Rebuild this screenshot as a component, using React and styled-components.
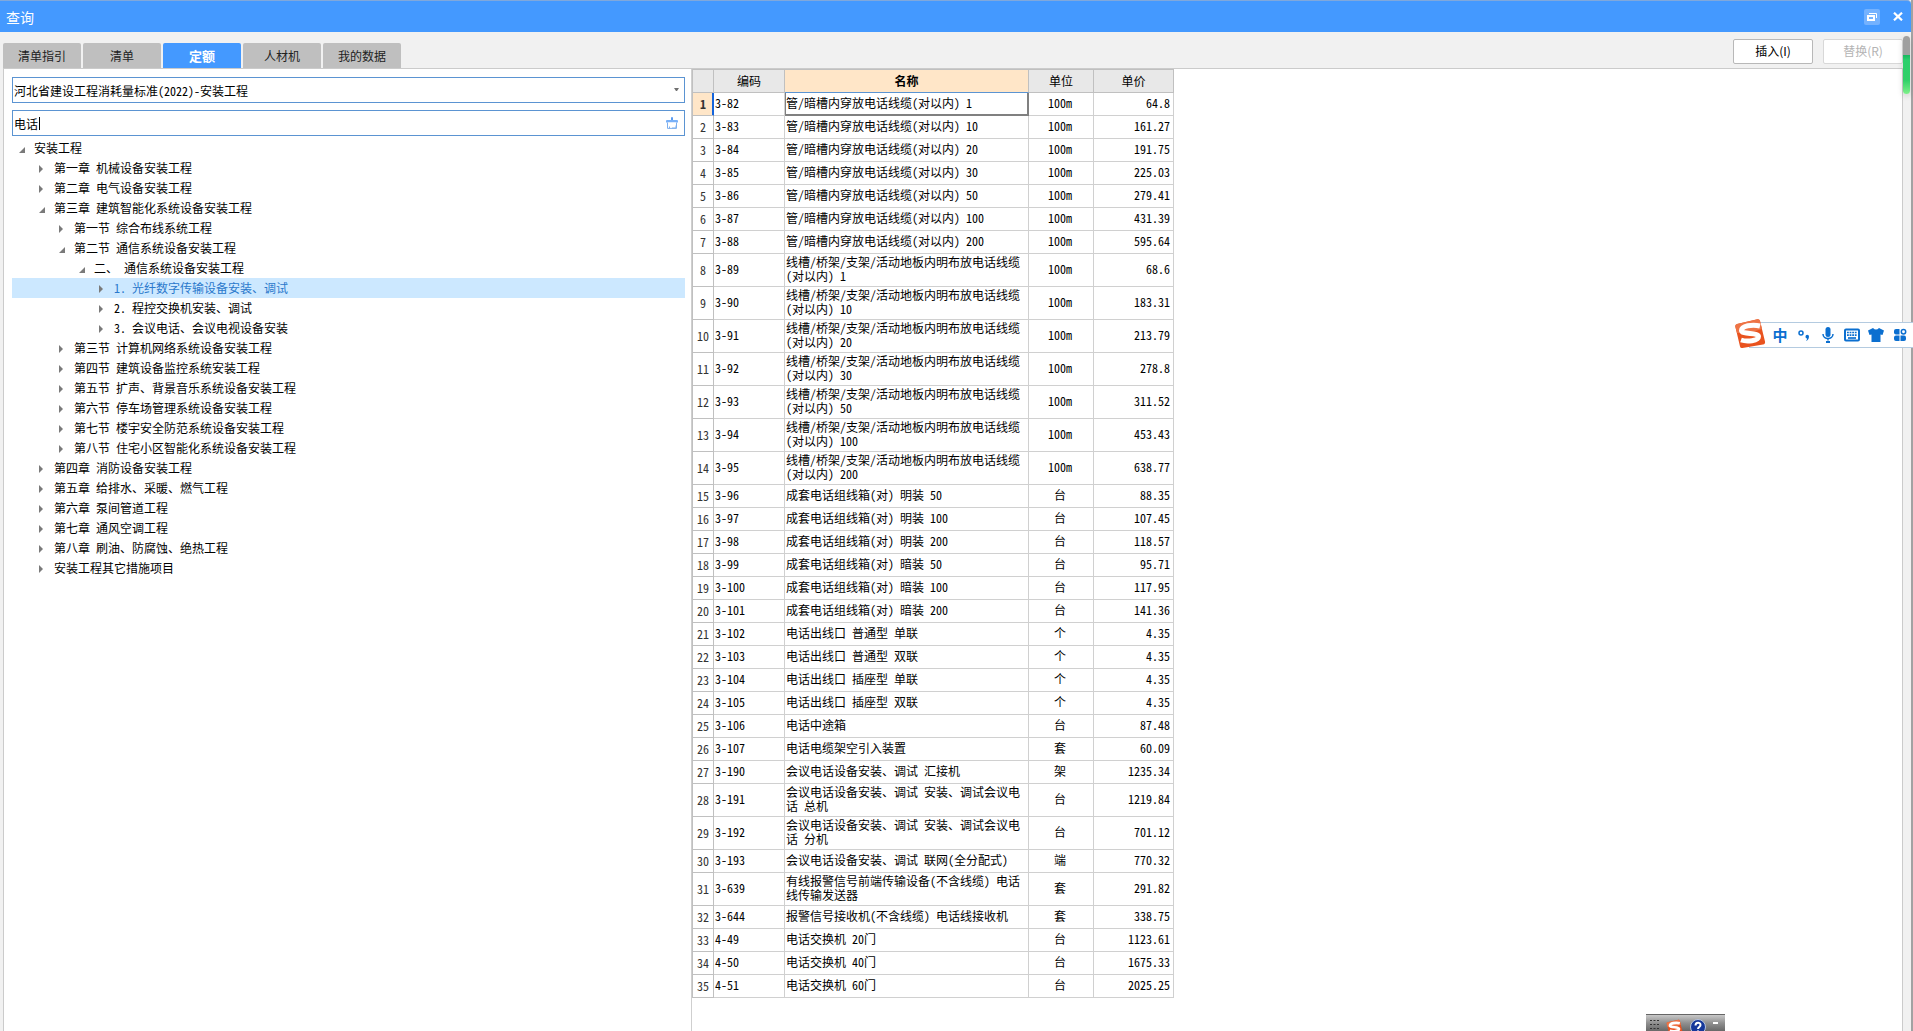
import { useState } from 'react';
import styled, { createGlobalStyle, css } from 'styled-components';

const tabs = ['清单指引', '清单', '定额', '人材机', '我的数据'];

const library = '河北省建设工程消耗量标准(2022)-安装工程';

const treeRows = [
    { level: 0, text: '安装工程', open: true },
    { level: 1, text: '第一章 机械设备安装工程' },
    { level: 1, text: '第二章 电气设备安装工程' },
    { level: 1, text: '第三章 建筑智能化系统设备安装工程', open: true },
    { level: 2, text: '第一节 综合布线系统工程' },
    { level: 2, text: '第二节 通信系统设备安装工程', open: true },
    { level: 3, text: '二、 通信系统设备安装工程', open: true },
    { level: 4, text: '1. 光纤数字传输设备安装、调试' },
    { level: 4, text: '2. 程控交换机安装、调试' },
    { level: 4, text: '3. 会议电话、会议电视设备安装' },
    { level: 2, text: '第三节 计算机网络系统设备安装工程' },
    { level: 2, text: '第四节 建筑设备监控系统安装工程' },
    { level: 2, text: '第五节 扩声、背景音乐系统设备安装工程' },
    { level: 2, text: '第六节 停车场管理系统设备安装工程' },
    { level: 2, text: '第七节 楼宇安全防范系统设备安装工程' },
    { level: 2, text: '第八节 住宅小区智能化系统设备安装工程' },
    { level: 1, text: '第四章 消防设备安装工程' },
    { level: 1, text: '第五章 给排水、采暖、燃气工程' },
    { level: 1, text: '第六章 泵间管道工程' },
    { level: 1, text: '第七章 通风空调工程' },
    { level: 1, text: '第八章 刷油、防腐蚀、绝热工程' },
    { level: 1, text: '安装工程其它措施项目' },
];

// code, name, unit, price
const quotaRows = [
    ['3-82', '管/暗槽内穿放电话线缆(对以内) 1', '100m', '64.8'],
    ['3-83', '管/暗槽内穿放电话线缆(对以内) 10', '100m', '161.27'],
    ['3-84', '管/暗槽内穿放电话线缆(对以内) 20', '100m', '191.75'],
    ['3-85', '管/暗槽内穿放电话线缆(对以内) 30', '100m', '225.03'],
    ['3-86', '管/暗槽内穿放电话线缆(对以内) 50', '100m', '279.41'],
    ['3-87', '管/暗槽内穿放电话线缆(对以内) 100', '100m', '431.39'],
    ['3-88', '管/暗槽内穿放电话线缆(对以内) 200', '100m', '595.64'],
    ['3-89', '线槽/桥架/支架/活动地板内明布放电话线缆(对以内) 1', '100m', '68.6'],
    ['3-90', '线槽/桥架/支架/活动地板内明布放电话线缆(对以内) 10', '100m', '183.31'],
    ['3-91', '线槽/桥架/支架/活动地板内明布放电话线缆(对以内) 20', '100m', '213.79'],
    ['3-92', '线槽/桥架/支架/活动地板内明布放电话线缆(对以内) 30', '100m', '278.8'],
    ['3-93', '线槽/桥架/支架/活动地板内明布放电话线缆(对以内) 50', '100m', '311.52'],
    ['3-94', '线槽/桥架/支架/活动地板内明布放电话线缆(对以内) 100', '100m', '453.43'],
    ['3-95', '线槽/桥架/支架/活动地板内明布放电话线缆(对以内) 200', '100m', '638.77'],
    ['3-96', '成套电话组线箱(对) 明装 50', '台', '88.35'],
    ['3-97', '成套电话组线箱(对) 明装 100', '台', '107.45'],
    ['3-98', '成套电话组线箱(对) 明装 200', '台', '118.57'],
    ['3-99', '成套电话组线箱(对) 暗装 50', '台', '95.71'],
    ['3-100', '成套电话组线箱(对) 暗装 100', '台', '117.95'],
    ['3-101', '成套电话组线箱(对) 暗装 200', '台', '141.36'],
    ['3-102', '电话出线口 普通型 单联', '个', '4.35'],
    ['3-103', '电话出线口 普通型 双联', '个', '4.35'],
    ['3-104', '电话出线口 插座型 单联', '个', '4.35'],
    ['3-105', '电话出线口 插座型 双联', '个', '4.35'],
    ['3-106', '电话中途箱', '台', '87.48'],
    ['3-107', '电话电缆架空引入装置', '套', '60.09'],
    ['3-190', '会议电话设备安装、调试 汇接机', '架', '1235.34'],
    ['3-191', '会议电话设备安装、调试 安装、调试会议电话 总机', '台', '1219.84'],
    ['3-192', '会议电话设备安装、调试 安装、调试会议电话 分机', '台', '701.12'],
    ['3-193', '会议电话设备安装、调试 联网(全分配式)', '端', '770.32'],
    ['3-639', '有线报警信号前端传输设备(不含线缆) 电话线传输发送器', '套', '291.82'],
    ['3-644', '报警信号接收机(不含线缆) 电话线接收机', '套', '338.75'],
    ['4-49', '电话交换机 20门', '台', '1123.61'],
    ['4-50', '电话交换机 40门', '台', '1675.33'],
    ['4-51', '电话交换机 60门', '台', '2025.25'],
];

function App() {
    const [activeTab, setActiveTab] = useState('定额');
    const [keyword, setKeyword] = useState('电话');
    const [selectedNode, selectNode] = useState(7);
    const [selectedRow, selectRow] = useState(0);

    return (
        <Window>
            <GlobalStyle />
            <TitleBar>
                <Title>查询</Title>
                <RestoreButton aria-label="还原">
                    <svg width="16" height="16" viewBox="0 0 16 16" fill="none" stroke="#fff">
                        <path d="M5 4.5H12.5V9" />
                        <path d="M4 7H10V11H4Z" strokeWidth="2" />
                    </svg>
                </RestoreButton>
                <TitleButton aria-label="关闭">
                    <svg width="10" height="9" viewBox="0 0 10 9" stroke="#fff" strokeWidth="2.2">
                        <path d="M1 0.7L9 8.3M9 0.7L1 8.3" />
                    </svg>
                </TitleButton>
            </TitleBar>
            <Toolbar>
                <TabList role="tablist">
                    {tabs.map((tab) => (
                        <Tab
                            key={tab}
                            role="tab"
                            aria-selected={tab === activeTab}
                            $active={tab === activeTab}
                            onClick={() => setActiveTab(tab)}
                        >
                            {tab}
                        </Tab>
                    ))}
                </TabList>
                <Actions>
                    <ActionButton>插入(I)</ActionButton>
                    <ActionButton disabled>替换(R)</ActionButton>
                </Actions>
            </Toolbar>
            <Content>
                <TreePane>
                    <Field>
                        <LibrarySelect aria-label="定额库" defaultValue={library}>
                            <option>{library}</option>
                        </LibrarySelect>
                        <SelectArrow width="5" height="3" viewBox="0 0 5 3">
                            <path d="M0 0H5L3 3H2Z" fill="#707070" />
                        </SelectArrow>
                    </Field>
                    <Field>
                        <SearchInput
                            aria-label="搜索"
                            value={keyword}
                            onChange={(e) => setKeyword(e.target.value)}
                        />
                        <Caret />
                        <ClearButton aria-label="清空" onClick={() => setKeyword('')}>
                            <BroomIcon />
                        </ClearButton>
                    </Field>
                    <Tree role="tree">
                        {treeRows.map((row, i) => (
                            <TreeRow
                                key={row.text}
                                role="treeitem"
                                aria-selected={i === selectedNode}
                                aria-level={row.level + 1}
                                $level={row.level}
                                $selected={i === selectedNode}
                                onClick={() => selectNode(i)}
                            >
                                <Toggle open={row.open} />
                                <TreeLabel>{row.text}</TreeLabel>
                            </TreeRow>
                        ))}
                    </Tree>
                </TreePane>
                <TablePane>
                    <QuotaTable selectedRow={selectedRow} selectRow={selectRow} />
                </TablePane>
            </Content>
            <ScrollThumb />
            <InputMethodBar />
            <TrayBar />
        </Window>
    );
}

function QuotaTable({ selectedRow, selectRow }) {
    return (
        <Table>
            <colgroup>
                <Col $width={21} />
                <Col $width={71} />
                <Col $width={244} />
                <Col $width={65} />
                <Col $width={80} />
            </colgroup>
            <thead>
                <tr>
                    <HeadCell aria-label="序号" />
                    <HeadCell>编码</HeadCell>
                    <HeadCell $active>名称</HeadCell>
                    <HeadCell>单位</HeadCell>
                    <HeadCell>单价</HeadCell>
                </tr>
            </thead>
            <tbody>
                {quotaRows.map(([code, name, unit, price], i) => (
                    <tr key={code} onClick={() => selectRow(i)}>
                        <IndexCell scope="row" $active={i === selectedRow}>{i + 1}</IndexCell>
                        <Cell>{code}</Cell>
                        <Cell $focused={i === selectedRow}>{name}</Cell>
                        <Cell $align="center">{unit}</Cell>
                        <Cell $align="right">{price}</Cell>
                    </tr>
                ))}
            </tbody>
        </Table>
    );
}

function Toggle({ open }) {
    return (
        <ToggleIcon width="17" height="10" viewBox="0 0 17 10" fill="#7a7a7a">
            {open ? <path d="M8 3V9H2Z" /> : <path d="M2 1L6 5L2 9Z" />}
        </ToggleIcon>
    );
}

function BroomIcon() {
    return (
        <svg width="12" height="12" viewBox="0 0 12 12">
            <rect x="5" y="0" width="2" height="4" rx="1" fill="#5b9cf0" />
            <path d="M1 3H11Q12 3 12 4V5.500H0V4Q0 3 1 3Z" fill="#78b0f8" />
            <path d="M1.500 5.500V11.400H10.500V5.500" fill="#fff" stroke="#7fb0ee" />
            <path d="M3.500 11.500V9.500M6 11H10V8.500" stroke="#7fb0ee" fill="none" />
        </svg>
    );
}

function SogouLogo({ size }) {
    return (
        <svg width={size} height={size} viewBox="0 0 32 32">
            <path
                d="M3 6Q1 6.500 1.300 8.500L6 28.500Q6.500 30.500 8.500 30L29 26.500Q31.500 26 31 23.500L26 3Q25.500 1 23.500 1.300Z"
                fill="#e9531f"
            />
            <path d="M3 6Q1 6.500 1.300 8.500L3 15Q14 16 28 11L26 3Q25.500 1 23.500 1.300Z" fill="#ee7446" />
            <path
                d="M26 8C18 6 7.500 8 7.500 12.500C7.500 17 24.500 14 24.500 18.500C24.500 23 13 24 7 22"
                fill="none"
                stroke="#fff"
                strokeWidth="5"
            />
        </svg>
    );
}

function InputMethodBar() {
    return (
        <ImeBar>
            <ImeLogo>
                <SogouLogo size={32} />
            </ImeLogo>
            <ImeButton>中</ImeButton>
            <ImeButton aria-label="标点">
                <svg width="14" height="14" viewBox="0 0 14 14">
                    <circle cx="4" cy="5" r="2" fill="none" stroke="#0b6fd0" strokeWidth="1.500" />
                    <path d="M8.500 8.500A1.600 1.600 0 0 1 12 8.500C12 11 10.500 12.500 9 13C9.800 12 10 11.500 10 10.500C9 10.500 8.500 9.800 8.500 8.500Z" fill="#0b6fd0" />
                </svg>
            </ImeButton>
            <ImeButton aria-label="语音">
                <svg width="14" height="16" viewBox="0 0 14 16">
                    <rect x="4.500" y="0" width="5" height="10" rx="2.500" fill="#0b6fd0" />
                    <path d="M2 7C2 13 12 13 12 7M7 12V13.500" fill="none" stroke="#0b6fd0" strokeWidth="1.500" />
                    <path d="M5 14H9V16H5Z" fill="#0b6fd0" />
                </svg>
            </ImeButton>
            <ImeButton aria-label="键盘">
                <svg width="16" height="14" viewBox="0 0 16 14" fill="none" stroke="#0b6fd0">
                    <rect x="1" y="1.500" width="14" height="11" rx="1" strokeWidth="2" />
                    <path d="M3 4.500H13M3 7.200H13" strokeWidth="1.700" strokeDasharray="1.800 .8" />
                    <path d="M4 10H12" strokeWidth="1.700" />
                </svg>
            </ImeButton>
            <ImeButton aria-label="皮肤">
                <svg width="16" height="14" viewBox="0 0 16 14" fill="#0b6fd0">
                    <path d="M5 0Q8 3 11 0L16 2.500L14.500 7L12.500 6.500V14H3.500V6.500L1.500 7L0 2.500Z" />
                </svg>
            </ImeButton>
            <ImeButton aria-label="工具箱">
                <svg width="14" height="14" viewBox="0 0 14 14" fill="#0b6fd0">
                    <path d="M3 1H6.500V6.500H3A2 2 0 0 1 1 4.500V3A2 2 0 0 1 3 1Z" />
                    <circle cx="10.500" cy="3.700" r="2.200" fill="none" stroke="#0b6fd0" strokeWidth="1.500" />
                    <path d="M3 7.500H6.500V13H3A2 2 0 0 1 1 11V9.500A2 2 0 0 1 3 7.500Z" />
                    <path d="M7.500 7.500H11A2 2 0 0 1 13 9.500V11A2 2 0 0 1 11 13H7.500Z" />
                </svg>
            </ImeButton>
        </ImeBar>
    );
}

function TrayBar() {
    return (
        <Tray>
            <svg width="9" height="12" viewBox="0 0 9 12" fill="none" stroke="#333" strokeDasharray="2 1.500">
                <path d="M0 1.500H9M0 5.500H9M0 9.500H9" />
            </svg>
            <SogouLogo size={17} />
            <svg width="16" height="16" viewBox="0 0 16 16">
                <circle cx="8" cy="8" r="7.500" fill="#15379a" stroke="#b8c4dd" />
                <path d="M5.500 6.500C5.500 3 10.500 3 10.500 6C10.500 8 8 8 8 10M8 11.500V13" fill="none" stroke="#fff" strokeWidth="2" />
            </svg>
            <svg width="6" height="12" viewBox="0 0 6 12">
                <path d="M0 3H5V5H0Z" fill="#fff" />
            </svg>
        </Tray>
    );
}

const GlobalStyle = createGlobalStyle`
    * {
        box-sizing: border-box;
    }
    body {
        margin: 0;
        background-color: #f1f1f1;
    }
    body, button, input, select {
        font-family: "Noto Sans Mono CJK SC", "Noto Sans CJK SC", sans-serif;
        font-size: 12px;
        color: #000;
    }
    button {
        padding: 0;
        border: none;
        background: none;
    }
`;

const Window = styled.div`
    display: flex;
    flex-direction: column;
    min-height: 100vh;
    border-right: 2px solid #a2a2a2;
    overflow: hidden;
`;

const TitleBar = styled.header`
    display: flex;
    align-items: center;
    gap: 10px;
    height: 32px;
    padding: 0 5px 0 6px;
    border-top: 1px solid #80a8dc;
    border-top-right-radius: 4px;
    background-color: #4499ff;
`;

const Title = styled.h1`
    flex: 1;
    margin: 0;
    font-size: 14px;
    font-weight: 400;
    color: #fff;
`;

const TitleButton = styled.button`
    display: flex;
    align-items: center;
    justify-content: center;
    width: 16px;
    height: 16px;
`;

const RestoreButton = styled(TitleButton)`
    border-radius: 2px;
    background-color: #74b2ff;
`;

const Toolbar = styled.div`
    display: flex;
    align-items: flex-end;
    justify-content: space-between;
    height: 36px;
    padding: 0 8px 0 3px;
`;

const TabList = styled.div`
    display: flex;
    gap: 2px;
`;

const Tab = styled.button`
    width: 78px;
    height: 25px;
    border-radius: 2px 2px 0 0;
    background-color: ${(props) => (props.$active ? '#4499ff' : '#bfbfbf')};
    color: ${(props) => (props.$active ? '#fff' : '#222')};
    font-size: ${(props) => (props.$active ? '13px' : '12px')};
    font-weight: ${(props) => (props.$active ? 700 : 400)};
`;

const Actions = styled.div`
    display: flex;
    gap: 10px;
    padding-bottom: 4px;
`;

const ActionButton = styled.button`
    width: 80px;
    height: 25px;
    padding-bottom: 2px;
    border: 1px solid #b8b8b8;
    border-radius: 2px;
    background-color: #fff;
    font-family: "Noto Sans CJK SC", sans-serif;

    &:disabled {
        border-color: #d8d8d8;
        color: #b4b4b4;
    }
`;

const Content = styled.main`
    display: flex;
    flex: 1;
    margin: 0 8px 0 3px;
    border: 1px solid #cbcbcb;
    border-bottom: none;
    background-color: #fff;
`;

const TreePane = styled.section`
    display: flex;
    flex-direction: column;
    flex: 0 1 687px;
    padding: 8px 6px 0 8px;
`;

const Field = styled.div`
    position: relative;
    margin-bottom: 7px;
`;

const fieldBox = css`
    display: block;
    width: 100%;
    height: 26px;
    padding: 0 24px 0 1px;
    border: 1px solid #5b94d2;
    border-radius: 0;
    background-color: #fff;
    outline: none;
`;

const LibrarySelect = styled.select`
    ${fieldBox}
    appearance: none;
`;

const SearchInput = styled.input`
    ${fieldBox}
`;

const SelectArrow = styled.svg`
    position: absolute;
    top: 11px;
    right: 6px;
    pointer-events: none;
`;

const Caret = styled.span`
    position: absolute;
    top: 7px;
    left: 27px;
    width: 1px;
    height: 13px;
    background-color: #000;
`;

const ClearButton = styled.button`
    position: absolute;
    top: 7px;
    right: 7px;
    display: flex;
`;

const Tree = styled.ul`
    margin: -5px 0 0;
    padding: 0;
    list-style: none;
`;

const TreeRow = styled.li`
    display: flex;
    align-items: center;
    height: 20px;
    padding-left: ${(props) => 5 + props.$level * 20}px;
    background-color: ${(props) => (props.$selected ? '#cce8ff' : 'transparent')};
    color: ${(props) => (props.$selected ? '#2a78cc' : '#000')};
    white-space: pre;
    cursor: default;
`;

const ToggleIcon = styled.svg`
    flex: none;
    margin-top: 2px;
`;

const TreeLabel = styled.span`
    padding-bottom: 2px;
`;

const TablePane = styled.section`
    flex: 1;
    border-left: 1px solid #cfcfcf;
`;

const Table = styled.table`
    width: 482px;
    table-layout: fixed;
    border-collapse: separate;
    border-spacing: 0;
    border-top: 1px solid #c0c0c0;
    border-left: 1px solid #c0c0c0;
    line-height: 14px;
`;

const Col = styled.col`
    width: ${(props) => props.$width}px;
`;

const HeadCell = styled.th`
    height: 23px;
    padding: 0;
    border-right: 1px solid #c0c0c0;
    border-bottom: 1px solid ${(props) => (props.$active ? '#5b94d2' : '#c0c0c0')};
    background-color: ${(props) => (props.$active ? '#ffe6c8' : '#e8e8e8')};
    font-weight: ${(props) => (props.$active ? 700 : 400)};
`;

const IndexCell = styled.th`
    padding: 0;
    border-right: 1px solid #c0c0c0;
    border-bottom: 1px solid #c0c0c0;
    color: #333;
    font-weight: 400;
    ${(props) => props.$active && css`
        border-right-color: #1464dc;
        box-shadow: inset -1px 0 #1464dc;
        background-color: #ffe6c8;
        font-weight: 700;
    `}
`;

const Cell = styled.td`
    height: 23px;
    padding: 1px 3px 3px 1px;
    border-right: 1px solid #d0d0d0;
    border-bottom: 1px solid #d0d0d0;
    text-align: ${(props) => props.$align || 'left'};
    ${(props) => props.$focused && css`
        border-color: #808080;
        box-shadow: inset -1px -1px #808080, inset 1px 0 #808080;
    `}
`;

const ScrollThumb = styled.div`
    position: absolute;
    top: 36px;
    right: 3px;
    width: 7px;
    height: 58px;
    border-radius: 4px;
    background: linear-gradient(#a0a0a0 0 19px, #18b860 19px, #2ccf6c 24px, #30d068 44px, #7ff08a);
    box-shadow: 0 2px 6px rgba(0, 0, 0, 0.15);
`;

const ImeBar = styled.div`
    position: absolute;
    top: 322px;
    right: 0;
    display: flex;
    align-items: center;
    gap: 8px;
    height: 26px;
    padding: 0 5px 0 22px;
    border: 1px solid #b4cbe0;
    border-right: none;
    background-color: #fff;
`;

const ImeLogo = styled.span`
    position: absolute;
    top: -5px;
    left: -16px;
    display: flex;
`;

const ImeButton = styled.button`
    display: flex;
    align-items: center;
    justify-content: center;
    width: 16px;
    height: 16px;
    color: #0b6fd0;
    font-size: 15px;
    font-weight: 700;
    line-height: 14px;
`;

const Tray = styled.div`
    position: fixed;
    right: 188px;
    bottom: 0;
    display: flex;
    gap: 7px;
    width: 79px;
    height: 17px;
    padding: 4px 4px 0;
    border-top: 1px solid #666;
    background: linear-gradient(#c8c8c8, #909090 50%, #686868);
    overflow: hidden;
`;

export default App;
